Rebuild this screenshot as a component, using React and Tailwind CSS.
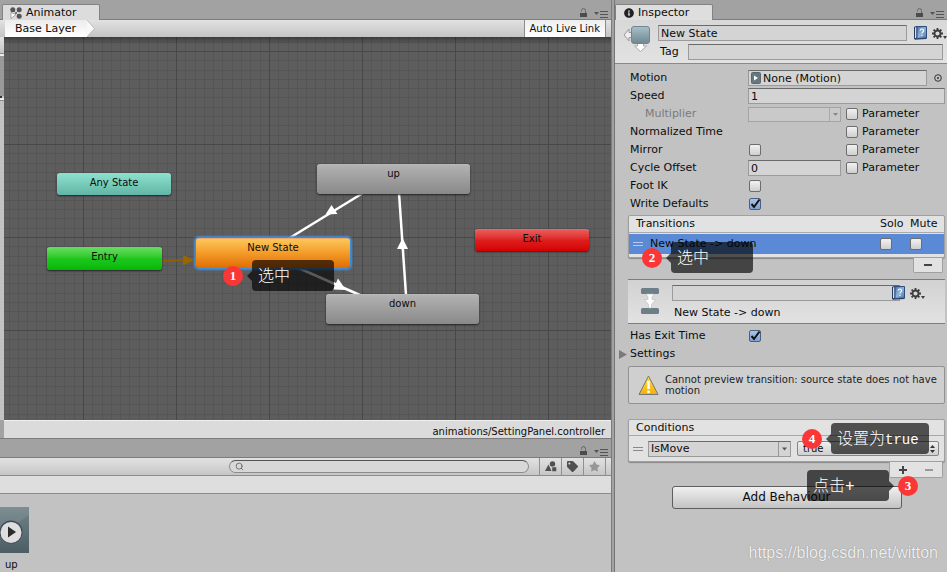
import { useState } from 'react'
import { FaInfoCircle, FaTag, FaStar, FaCog } from 'react-icons/fa'
import { Search } from 'lucide-react'
import clsx from 'clsx'

const NODES = [
  { id: 'any', label: 'Any State', box: 'left-[53px] top-[136px] w-[114px] h-[22px]', color: 'from-[#8be0cc] to-[#62b5a6]' },
  { id: 'entry', label: 'Entry', box: 'left-[43px] top-[210px] w-[115px] h-[23px]', color: 'from-[#62dc5c] via-[#1cc71c] to-[#04b804]' },
  { id: 'new', label: 'New State', box: 'left-[192px] top-[201px] w-[154px] h-[30px]', color: 'from-[#fdc659] via-[#f39a26] to-[#e06c00]', selected: true },
  { id: 'up', label: 'up', box: 'left-[313px] top-[127px] w-[153px] h-[30px]', color: 'from-[#b2b2b2] to-[#898989]' },
  { id: 'down', label: 'down', box: 'left-[322px] top-[257px] w-[153px] h-[30px]', color: 'from-[#b2b2b2] to-[#898989]' },
  { id: 'exit', label: 'Exit', box: 'left-[471px] top-[192px] w-[114px] h-[22px]', color: 'from-[#e85a5a] via-[#dd1c1c] to-[#d40000]' },
]

const STEPS = [0, 9, 19, 28, 37, 46, 56, 65, 74, 84]

function LockIcon() {
  return (
    <svg width="9" height="10" viewBox="0 0 9 10" fill="none">
      <path d="M2.500 3.500V2.600a2 2 0 0 1 4 0V5" stroke="#666" />
      <rect x="1" y="5" width="7" height="4" fill="#4c4c4c" />
    </svg>
  )
}

function MenuIcon() {
  return (
    <svg width="14" height="8" viewBox="0 0 14 8">
      <path d="M0 2h5L2.500 5z" fill="#555" />
      <path d="M6 1.500h8M6 4.500h8M6 7.500h8" stroke="#555" />
    </svg>
  )
}

function WindowButtons() {
  return (
    <div className="ml-auto flex items-end gap-1.5 pr-[3px] pb-px">
      <button aria-label="Lock"><LockIcon /></button>
      <button aria-label="Window menu"><MenuIcon /></button>
    </div>
  )
}

function AnimatorIcon() {
  return (
    <svg width="12" height="12" viewBox="0 0 12 12" fill="#555">
      <path d="M3 3l6 6M9 3L3 9" stroke="#777" />
      <circle cx="2.800" cy="2.800" r="2.500" />
      <circle cx="9.200" cy="2.800" r="2.500" />
      <circle cx="9.200" cy="9.200" r="2.500" />
      <path d="M1 5.500v6l5-4z" fill="#fff" stroke="#777" strokeWidth=".6" />
    </svg>
  )
}

function BookIcon() {
  return (
    <svg width="13" height="14" viewBox="0 0 13 14">
      <defs>
        <linearGradient id="book" x2="1" y2="1">
          <stop offset="0" stopColor="#4a74ac" />
          <stop offset=".5" stopColor="#8fb2d8" />
          <stop offset="1" stopColor="#4a74ac" />
        </linearGradient>
      </defs>
      <path d="M.5 1L3 .5v11.500L.5 13z" fill="#d5e0ee" stroke="#233c66" />
      <path d="M3 .5h9.500V12L3 12.500z" fill="url(#book)" stroke="#2f4d78" />
      <path d="M1 13.200l11.500-.7" stroke="#233c66" />
      <path d="M6 4.600c.2-2.200 3.800-2 3.600.2C9.500 6 8 6 8 7.600M8 8.800v1.300" fill="none" stroke="#fff" strokeWidth="1.100" />
    </svg>
  )
}

function GearButton() {
  return (
    <button aria-label="Options" className="flex items-end text-[#3c3c3c]">
      <svg width="11" height="11" viewBox="0 0 11 11" fill="none" stroke="#3c3c3c">
        <circle cx="5.500" cy="5.500" r="3" strokeWidth="1.800" />
        <path d="M5.500 0v2M5.500 9v2M0 5.500h2M9 5.500h2M1.600 1.600L3 3M8 8l1.400 1.400M9.400 1.600L8 3M3 8L1.600 9.400" strokeWidth="1.800" />
      </svg>
      <svg width="4" height="3" viewBox="0 0 4 3"><path d="M0 0h4L2 3z" fill="#3c3c3c" /></svg>
    </button>
  )
}

function StateIcon() {
  return (
    <svg width="27" height="28" viewBox="0 0 27 28">
      <defs>
        <linearGradient id="state" x2="0" y2="1">
          <stop offset="0" stopColor="#a9c0c8" />
          <stop offset=".5" stopColor="#8aa3ac" />
          <stop offset="1" stopColor="#6f8790" />
        </linearGradient>
      </defs>
      <path d="M1 10l5-6v3.500h3v5H6V16z" fill="#eee" stroke="#999" />
      <path d="M17.500 26.500l-6-5.500h3v-3h6v3h3z" fill="#fff" stroke="#aaa" />
      <rect x="8.500" y="1.500" width="18" height="17" rx="2.500" fill="url(#state)" stroke="#70858d" />
    </svg>
  )
}

function TransitionIcon() {
  return (
    <svg width="20" height="28" viewBox="0 0 20 28">
      <rect x="1" y="1" width="18" height="6" rx="1.500" fill="#6c7f86" />
      <rect x="1" y="21" width="18" height="6" rx="1.500" fill="#6c7f86" />
      <path d="M6 7h8l-2 3v2.500h3.500l-4 5v3.500h-3v-3.500l-4-5H8V10z" fill="#fff" stroke="#bbb" strokeWidth=".6" />
    </svg>
  )
}

function WarningIcon() {
  return (
    <svg className="shrink-0" width="21" height="21" viewBox="0 0 21 21">
      <defs>
        <linearGradient id="warn" x2="0" y2="1">
          <stop offset="0" stopColor="#ffe04a" />
          <stop offset="1" stopColor="#f5b000" />
        </linearGradient>
      </defs>
      <path d="M10.500 1L20 19.500H1z" fill="url(#warn)" stroke="#777" strokeLinejoin="round" />
      <path d="M10.500 6v8M10.500 15.500v2.500" stroke="#fff" strokeWidth="2.400" />
    </svg>
  )
}

function Checkbox({ id, label, defaultChecked = false }) {
  const [checked, setChecked] = useState(defaultChecked)
  return (
    <span className="relative block size-3">
      <input
        id={id}
        type="checkbox"
        aria-label={label}
        checked={checked}
        onChange={(e) => setChecked(e.target.checked)}
        className="block size-3 appearance-none rounded-xs border border-[#6d6d6d] bg-linear-to-b from-[#f2f2f2] to-[#cfcfcf] checked:border-[#4d5f80] checked:from-[#a9c3e8] checked:to-[#7fa2d4]"
      />
      {checked && (
        <svg className="pointer-events-none absolute inset-0" width="12" height="12" viewBox="0 0 12 12" fill="none">
          <path d="M2.500 6l2.500 3 5.500-7.500" stroke="#111" strokeWidth="2" />
        </svg>
      )}
    </span>
  )
}

const FIELD = 'h-4 min-w-0 border border-[#9b9b9b] border-t-[#6a6a6a] bg-[#d4d4d4] px-0.5 leading-none'

function Row({ label, htmlFor, muted, children }) {
  return (
    <div className="grid h-[18px] grid-cols-[118px_minmax(0,1fr)] items-center">
      <label htmlFor={htmlFor} className={clsx(muted && 'pl-[15px] text-[#7b7b7b]')}>{label}</label>
      <div className="flex items-center">{children}</div>
    </div>
  )
}

function ParameterToggle({ id }) {
  return (
    <div className="ml-auto flex w-[99px] items-center gap-1">
      <Checkbox id={id} />
      <label htmlFor={id}>Parameter</label>
    </div>
  )
}

function Step({ number, text, className, side = 'left' }) {
  return (
    <div className={clsx('pointer-events-none absolute z-10 flex items-center gap-[9px]', side === 'right' && 'flex-row-reverse', className)}>
      <span className="grid size-5 place-items-center rounded-full bg-[#fb3636] font-['Liberation_Serif',serif] text-[13px] leading-none font-bold text-white">
        {number}
      </span>
      <span className="relative flex h-[31px] min-w-[82px] items-center rounded-sm bg-black/65 px-1.5 pt-[3px] font-['Liberation_Mono','Noto_Sans_CJK_SC',monospace] text-base leading-none font-light text-white">
        <svg
          className={clsx('absolute top-[11px]', side === 'right' ? '-right-[5px] rotate-180' : '-left-[5px]')}
          width="5"
          height="10"
          viewBox="0 0 5 10"
        >
          <path d="M5 0v10L0 5z" fill="#000" fillOpacity=".65" />
        </svg>
        {text}
      </span>
    </div>
  )
}

function Grip({ light }) {
  return <span className={clsx('h-1 w-2.5 border-y', light ? 'border-[#b9cbec]' : 'border-[#888]')} />
}

function Graph() {
  return (
    <div className="relative min-w-0 flex-1 overflow-hidden bg-[#5d5d5d]">
      <svg className="absolute inset-0 size-full">
        <defs>
          <pattern id="grid" x="79" y="14" width="93" height="93" patternUnits="userSpaceOnUse">
            {STEPS.map((s) => (
              <g key={s} fill={s === 0 ? '#484848' : '#555'}>
                <rect x={s} width="1" height="93" />
                <rect y={s} width="93" height="1" />
              </g>
            ))}
            <path d="M0 0h93v1H0zM0 0h1v93H0z" fill="#484848" />
          </pattern>
          <linearGradient id="shade" x2="0" y2="1">
            <stop offset="0" stopOpacity=".35" />
            <stop offset="1" stopOpacity="0" />
          </linearGradient>
        </defs>
        <rect width="100%" height="100%" fill="url(#grid)" />
        <rect width="100%" height="7" fill="url(#shade)" />
        <g stroke="#fff" strokeWidth="2.500" fill="#fff">
          <path d="M359 156L284 202" />
          <path d="M290 229L358 259" />
          <path d="M402 258L395 156" />
        </g>
        <g fill="#fff">
          <path d="M321.500 177.500l6-9.500 6 9z" />
          <path d="M342 253l-13-.5 5-11z" />
          <path d="M398.500 201l5.500 11h-11z" />
        </g>
        <path d="M158 224L181 223" stroke="#8f6000" strokeWidth="2" />
        <path d="M179 218l11 5-11 5.500z" fill="#996600" />
      </svg>
      {NODES.map((n) => (
        <div
          key={n.id}
          className={clsx(
            'absolute rounded-[3px] border-t border-white/40 bg-linear-to-b pt-[3px] text-center text-[10px] leading-[12px]',
            n.selected ? 'shadow-[0_0_2px_2px_#3f8fdc]' : 'shadow-[0_1px_2px_#222]',
            n.box,
            n.color,
          )}
        >
          {n.label}
        </div>
      ))}
      <Step number="1" text="选中" className="left-[219px] top-[223px]" />
    </div>
  )
}

function Animator() {
  return (
    <section className="flex flex-1 flex-col">
      <div className="flex h-5 items-end border-b border-[#7c7c7c] pl-0.5">
        <div className="-mb-px flex h-4 w-[98px] items-center gap-1 rounded-t-xs border border-b-0 border-[#828282] bg-[#dcdcdc] pl-[7px]">
          <AnimatorIcon />
          Animator
        </div>
        <WindowButtons />
      </div>
      <div className="flex h-[17px] items-stretch bg-linear-to-b from-[#e2e2e2] to-[#c4c4c4] pl-[5px]">
        <button className="bg-linear-to-b from-[#ececec] to-white pr-[11px] pl-2.5 leading-[17px]">Base Layer</button>
        <svg width="8" height="17" viewBox="0 0 8 17">
          <path d="M0 0l7.500 8.500L0 17z" fill="#f8f8f8" />
          <path d="M0 0l7.500 8.500L0 17" fill="none" stroke="#aaa" strokeWidth=".7" />
        </svg>
        <button className="mr-[5px] ml-auto border-x border-[#8c8c8c] bg-linear-to-b from-[#eee] to-white px-[5px] text-[10px]">Auto Live Link</button>
      </div>
      <div className="flex flex-1">
        <div className="w-1 bg-[#c2c2c2]">
          <div className="h-[17px] border-b border-[#8c8c8c] bg-linear-to-b from-[#e2e2e2] to-[#c4c4c4]" />
          <div className="h-[42px] border-t-2 border-[#ececec] bg-[#999]" />
          <div className="h-0.5 w-0.5 bg-[#333]" />
          <div className="h-[3px] border-b border-[#8c8c8c] bg-[#eee]" />
        </div>
        <Graph />
      </div>
      <div className="ml-1 h-[18px] border-t border-[#f0f0f0] bg-[#dbdbdb] pr-1.5 text-right text-[10px] leading-[22px]">
        animations/SettingPanel.controller
      </div>
    </section>
  )
}

function Project() {
  return (
    <section className="flex h-[134px] flex-col">
      <div className="flex h-[21px] items-end border-y border-[#7c7c7c]">
        <WindowButtons />
      </div>
      <div className="flex h-[18px] items-stretch border-b border-[#8c8c8c] bg-linear-to-b from-[#e2e2e2] to-[#c6c6c6] pr-[5px]">
        <label className="my-0.5 mr-2.5 ml-auto flex w-[300px] items-center rounded-full border border-[#8c8c8c] border-t-[#555] bg-[#d8d8d8] pl-[5px]">
          <Search size={9} color="#555" />
          <input aria-label="Search" className="min-w-0 flex-1 pl-1 text-[10px] leading-none outline-none" />
        </label>
        <button aria-label="Search by type" className="grid w-[22px] place-items-center border-l border-[#909090]">
          <svg width="12" height="11" viewBox="0 0 12 11" fill="#505050">
            <circle cx="7.500" cy="3" r="2.700" />
            <path d="M0 10l3.500-6.500L6.500 10z" />
            <path d="M7 6h4.500v4.500H7z" stroke="#ccc" strokeWidth=".5" />
          </svg>
        </button>
        <button aria-label="Search by label" className="grid w-[22px] place-items-center border-l border-[#909090]">
          <FaTag size={11} color="#505050" />
        </button>
        <button aria-label="Favorite" className="grid w-[23px] place-items-center border-x border-[#909090]">
          <FaStar size={11} color="#969696" />
        </button>
      </div>
      <div className="h-[18px] border-b border-[#8c8c8c] bg-[#dedede]" />
      <div className="flex-1 bg-[#c2c2c2] pt-[13px]">
        <div className="w-[29px]">
          <svg width="29" height="46" viewBox="0 0 29 46">
            <defs>
              <linearGradient id="clip" x2="0" y2="1">
                <stop offset="0" stopColor="#72848a" />
                <stop offset="1" stopColor="#4c5d63" />
              </linearGradient>
            </defs>
            <rect width="29" height="46" fill="url(#clip)" />
            <path d="M0 0h29v8L0 28z" fill="#fff" fillOpacity=".08" />
            <circle cx="11" cy="25" r="11.500" fill="#3e4c52" />
            <circle cx="11" cy="25.500" r="10.500" fill="#dedede" />
            <path d="M8 19.500v11l8-5.500z" fill="#2b2b2b" />
          </svg>
          <div className="pt-[5px] pl-[5px] text-[10px] leading-[14px]">up</div>
        </div>
      </div>
    </section>
  )
}

function Inspector() {
  return (
    <aside className="ml-0.5 flex w-[333px] shrink-0 flex-col border-l border-[#757575]">
      <div className="flex h-5 items-end border-b border-[#7c7c7c]">
        <div className="-mb-px flex h-4 w-[98px] items-center gap-1 rounded-t-xs border border-b-0 border-[#828282] bg-[#dedede] pl-2">
          <FaInfoCircle size={10} color="#222" />
          Inspector
        </div>
        <WindowButtons />
      </div>

      <div className="flex h-11 border-b border-[#8a8a8a] bg-linear-to-b from-[#d8d8d8] to-[#e2e2e2] pt-[5px] pl-2">
        <div className="w-[35px]"><StateIcon /></div>
        <div className="min-w-0 flex-1">
          <div className="flex items-center">
            <input aria-label="State name" defaultValue="New State" className={clsx(FIELD, 'flex-1')} />
            <div className="flex w-10 items-center justify-between pl-[7px]">
              <BookIcon />
              <GearButton />
            </div>
          </div>
          <div className="mt-[3px] flex items-center pr-1">
            <label htmlFor="tag" className="w-[30px] pl-0.5">Tag</label>
            <input id="tag" className={clsx(FIELD, 'flex-1')} />
          </div>
        </div>
      </div>

      <div className="flex-1 bg-[#c2c2c2] pt-[5px] pr-0.5 pl-[13px]">
        <div className="pl-0.5">
          <Row label="Motion">
            <div className={clsx(FIELD, 'flex flex-1 items-center gap-0.5')}>
              <svg width="10" height="12" viewBox="0 0 10 12">
                <rect x=".5" y=".5" width="9" height="11" rx="1" fill="#66777e" stroke="#5a686e" />
                <path d="M3 3.500v5L7 6z" fill="#fff" />
              </svg>
              None (Motion)
            </div>
            <button aria-label="Select motion" className="grid w-[18px] place-items-center pl-1">
              <svg width="8" height="8" viewBox="0 0 8 8">
                <circle cx="4" cy="4" r="3.300" fill="none" stroke="#333" />
                <circle cx="4" cy="4" r="1" fill="#333" />
              </svg>
            </button>
          </Row>
          <Row label="Speed" htmlFor="speed">
            <input id="speed" defaultValue="1" className={clsx(FIELD, 'flex-1')} />
          </Row>
          <Row label="Multiplier" htmlFor="multiplier" muted>
            <div className="relative w-[93px]">
              <select id="multiplier" disabled className="block h-[15px] w-full appearance-none border border-[#a4a4a4] bg-[#c9c9c9]" />
              <svg className="pointer-events-none absolute top-0 right-0" width="12" height="15" viewBox="0 0 12 15">
                <path d="M.5 1v13" stroke="#aaa" />
                <path d="M4 6h5L6.500 9z" fill="#888" />
              </svg>
            </div>
            <ParameterToggle id="multiplier-param" />
          </Row>
          <Row label="Normalized Time"><ParameterToggle id="time-param" /></Row>
          <Row label="Mirror" htmlFor="mirror">
            <div className="pl-px"><Checkbox id="mirror" /></div>
            <ParameterToggle id="mirror-param" />
          </Row>
          <Row label="Cycle Offset" htmlFor="cycle">
            <input id="cycle" defaultValue="0" className={clsx(FIELD, 'w-[93px]')} />
            <ParameterToggle id="cycle-param" />
          </Row>
          <Row label="Foot IK" htmlFor="foot"><div className="pl-px"><Checkbox id="foot" /></div></Row>
          <Row label="Write Defaults" htmlFor="defaults"><div className="pl-px"><Checkbox id="defaults" defaultChecked /></div></Row>
        </div>

        <div className="relative mt-0.5">
          <div className="rounded-xs border border-[#a0a0a0] bg-[#e2e2e2] pb-[3px] shadow-[0_1px_1px_#888]">
            <div className="flex h-[17px] items-center border-b border-[#a8a8a8] pl-[7px]">
              Transitions
              <span className="ml-auto w-[30px]">Solo</span>
              <span className="w-[34px]">Mute</span>
            </div>
            <div className="mt-px flex h-5 items-center bg-[#5a8ad6] pl-1">
              <Grip light />
              <span className="pl-[7px]">New State -&gt; down</span>
              <div className="ml-auto w-[30px]"><Checkbox label="Solo" /></div>
              <div className="w-[34px]"><Checkbox label="Mute" /></div>
            </div>
          </div>
          <button aria-label="Remove transition" className="mr-0.5 ml-auto grid h-[15px] w-[30px] place-items-center rounded-b-xs border border-t-0 border-[#a0a0a0] bg-[#e2e2e2]">
            <span className="h-0.5 w-2 bg-[#444]" />
          </button>
          <Step number="2" text="选中" className="top-[27px] left-[14px]" />
        </div>

        <div className="mt-[6px] flex h-[45px] border-y border-[#7d7d7d] bg-linear-to-b from-[#d2d2d2] to-[#e2e2e2] pt-[5px] pl-3">
          <div className="w-8 pt-0.5"><TransitionIcon /></div>
          <div className="min-w-0 flex-1">
            <div className="flex items-center pr-5">
              <input aria-label="Transition name" className={clsx(FIELD, 'flex-1')} />
              <div className="-ml-2 flex items-center gap-[5px]">
                <BookIcon />
                <GearButton />
              </div>
            </div>
            <div className="pt-1 pl-0.5 leading-4">New State -&gt; down</div>
          </div>
        </div>

        <div className="pt-[3px] pl-0.5">
          <Row label="Has Exit Time" htmlFor="exit-time"><div className="pl-px"><Checkbox id="exit-time" defaultChecked /></div></Row>
        </div>
        <button className="-ml-[9px] flex h-[18px] items-center gap-[3px]">
          <svg width="8" height="9" viewBox="0 0 8 9"><path d="M0 0v9l8-4.500z" fill="#7a7a7a" /></svg>
          Settings
        </button>

        <div className="mt-[3px] flex h-[38px] items-center gap-1.5 rounded-xs border border-[#929292] bg-[#cfcfcf] pl-[9px] text-[10px] leading-[11px] text-[#222]">
          <WarningIcon />
          <p>Cannot preview transition: source state does not have motion</p>
        </div>

        <div className="relative mt-[15px]">
          <div className="rounded-xs border border-[#a0a0a0] bg-[#e2e2e2] shadow-[0_1px_1px_#888]">
            <div className="flex h-4 items-center border-b border-[#a8a8a8] pl-[7px]">Conditions</div>
            <div className="flex h-[25px] items-center pr-[5px] pl-1">
              <Grip />
              <div className="relative ml-[5px] w-[143px]">
                <select aria-label="Condition parameter" className="block h-4 w-full appearance-none border border-[#9b9b9b] border-t-[#6a6a6a] bg-[#d4d4d4] px-0.5 leading-[14px]">
                  <option>IsMove</option>
                </select>
                <svg className="pointer-events-none absolute top-0 right-0" width="13" height="16" viewBox="0 0 13 16">
                  <path d="M.5 1v14" stroke="#999" />
                  <path d="M4 6.500h5L6.500 9.500z" fill="#555" />
                </svg>
              </div>
              <div className="relative ml-1.5 flex-1">
                <select aria-label="Condition value" className="block h-[15px] w-full appearance-none rounded-xs border border-[#858585] bg-linear-to-b from-[#efefef] to-[#cfcfcf] px-[5px] text-[10px] leading-[13px]">
                  <option>true</option>
                  <option>false</option>
                </select>
                <svg className="pointer-events-none absolute top-1 right-1" width="5" height="8" viewBox="0 0 5 8">
                  <path d="M0 3h5L2.500 0zM0 5h5L2.500 8z" fill="#333" />
                </svg>
              </div>
            </div>
          </div>
          <div className="mr-0.5 ml-auto flex h-4 w-[54px] rounded-b-xs border border-t-0 border-[#a0a0a0] bg-[#e2e2e2]">
            <button aria-label="Add condition" className="grid flex-1 place-items-center">
              <svg width="8" height="8" viewBox="0 0 8 8"><path d="M4 0v8M0 4h8" stroke="#444" strokeWidth="2" /></svg>
            </button>
            <button aria-label="Remove condition" className="grid flex-1 place-items-center">
              <span className="h-0.5 w-2 bg-[#999]" />
            </button>
          </div>
          <Step
            number="4"
            text={<>设置为<span className="pr-1 text-[14px]">true</span></>}
            className="top-1 left-[174px]"
          />
          <Step number="3" text="点击+" side="right" className="top-[51px] right-[27px]" />
        </div>

        <button className="mx-auto mt-2 block h-[23px] w-[230px] rounded-[3px] border border-[#5e5e5e] bg-linear-to-b from-[#f0f0f0] to-[#c3c3c3] text-xs leading-[21px]">
          Add Behaviour
        </button>
        <p className="pt-8 pr-[7px] text-right font-['Liberation_Sans',sans-serif] text-base leading-6 text-[#efefef] [text-shadow:0_0_1px_#777]">
          https://blog.csdn.net/witton
        </p>
      </div>
    </aside>
  )
}

export default function App() {
  return (
    <div className="flex min-h-screen bg-[#a2a2a2] font-['DejaVu_Sans',sans-serif] text-[11px] leading-[14px] text-[#0c0c0c]">
      <main className="flex min-w-0 flex-1 flex-col border-r border-[#7c7c7c]">
        <Animator />
        <Project />
      </main>
      <Inspector />
    </div>
  )
}
